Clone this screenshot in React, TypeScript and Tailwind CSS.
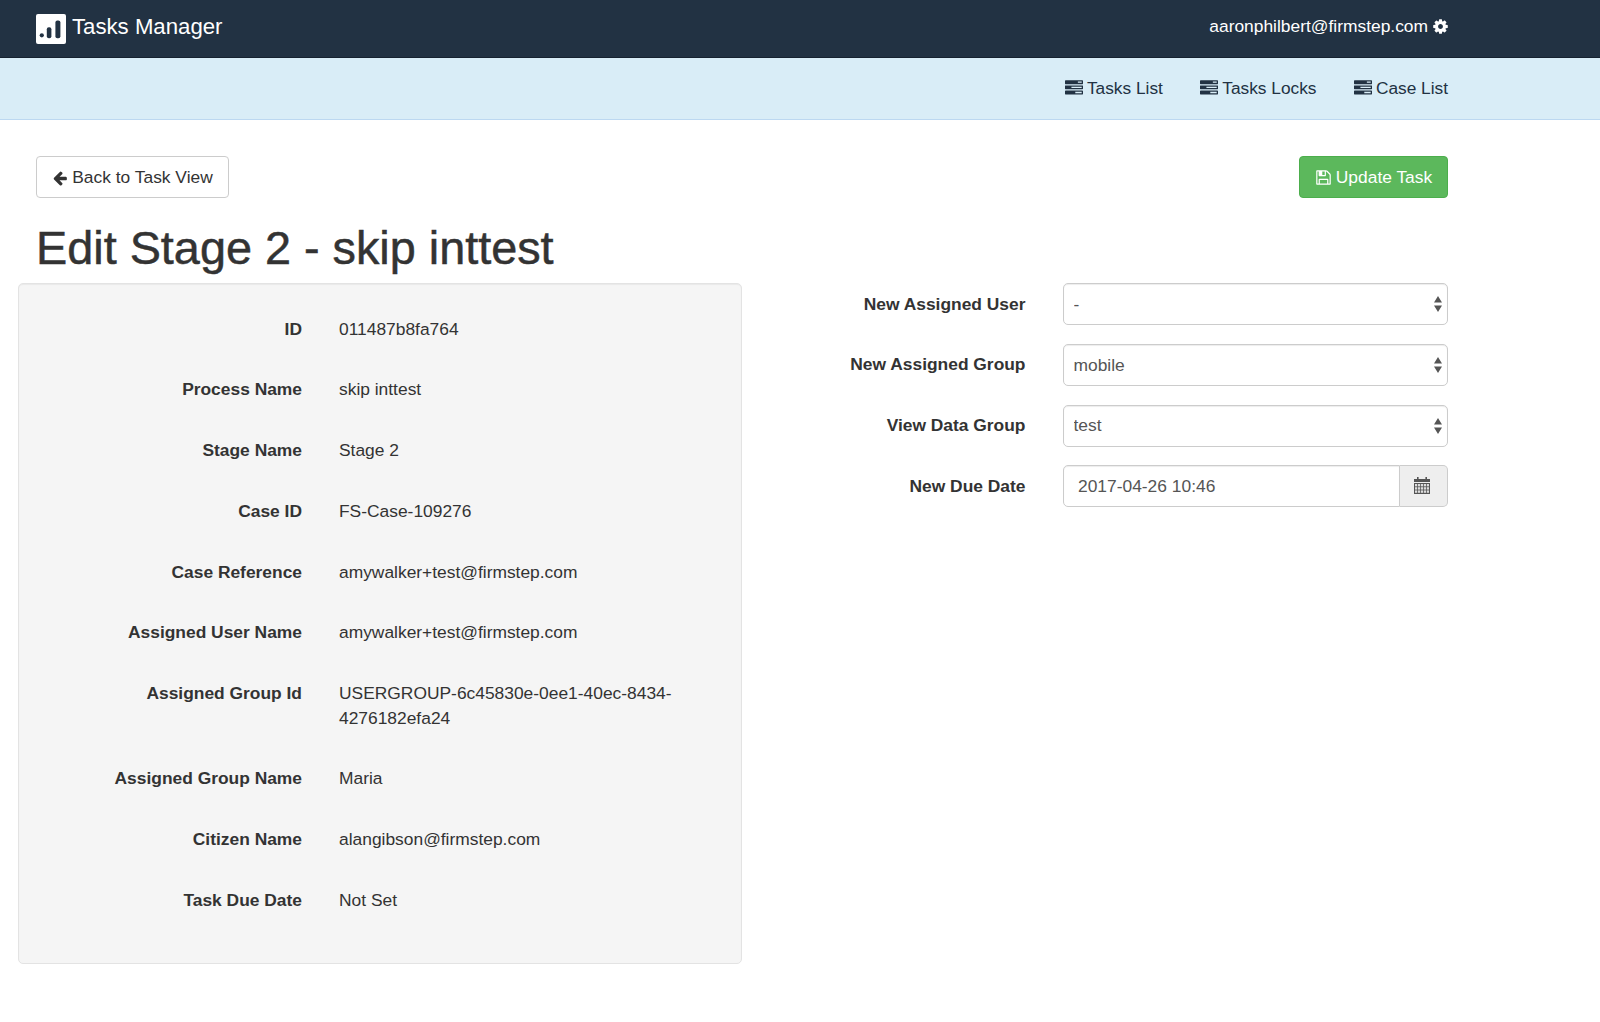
import React from "react";

const I = ({ d, className }: { d: string; className: string }) => (
  <svg viewBox="0 0 1792 1792" className={className} fill="currentColor" fillRule="evenodd">
    <path d={d} />
  </svg>
);

const tasks =
  "M1024 1408h640v-128h-640v128zm-384-512h1024v-128h-1024v128zm640-512h384v-128h-384v128zm512 832v256q0 26-19 45t-45 19h-1664q-26 0-45-19t-19-45v-256q0-26 19-45t45-19h1664q26 0 45 19t19 45zm0-512v256q0 26-19 45t-45 19h-1664q-26 0-45-19t-19-45v-256q0-26 19-45t45-19h1664q26 0 45 19t19 45zm0-512v256q0 26-19 45t-45 19h-1664q-26 0-45-19t-19-45v-256q0-26 19-45t45-19h1664q26 0 45 19t19 45z";
const cog =
  "M1152 896q0-106-75-181t-181-75-181 75-75 181 75 181 181 75 181-75 75-181zm512-109v222q0 12-8 23t-20 13l-185 28q-19 54-39 91 35 50 107 138 10 12 10 25t-9 23q-27 37-99 108t-94 71q-12 0-26-9l-138-108q-44 23-91 38-16 136-29 186-7 28-36 28h-222q-14 0-24.5-8.5t-11.5-21.5l-28-184q-49-16-90-37l-141 107q-10 9-25 9-14 0-25-11-126-114-165-168-7-10-7-23 0-12 8-23 15-21 51-66.5t54-70.5q-27-50-41-99l-183-27q-13-2-21-12.5t-8-23.5v-222q0-12 8-23t19-13l186-28q14-46 39-92-40-57-107-138-10-12-10-24 0-10 9-23 26-36 98.5-107.5t94.5-71.5q13 0 26 10l138 107q44-23 91-38 16-136 29-186 7-28 36-28h222q14 0 24.5 8.5t11.5 21.5l28 184q49 16 90 37l142-107q9-9 24-9 13 0 25 10 129 119 165 170 7 8 7 22 0 12-8 23-15 21-51 66.5t-54 70.5q26 50 41 98l183 28q13 2 21 12.5t8 23.5z";
const arrow =
  "M1664 896v128q0 53-32.5 90.5t-84.5 37.5h-704l293 294q38 36 38 90t-38 90l-75 76q-37 37-90 37-52 0-91-37l-651-652q-37-37-37-90 0-52 37-91l651-650q38-38 91-38 52 0 90 38l75 74q38 38 38 91t-38 91l-293 293h704q52 0 84.5 37.5t32.5 90.5z";
const floppy =
  "M512 1536h768v-384h-768v384zm896 0h128v-896q0-14-10-38.5t-20-34.5l-281-281q-10-10-34-20t-39-10v416q0 40-28 68t-68 28h-576q-40 0-68-28t-28-68v-416h-128v1280h128v-416q0-40 28-68t68-28h832q40 0 68 28t28 68v416zm-384-928v-320q0-13-9.5-22.5t-22.5-9.5h-192q-13 0-22.5 9.5t-9.5 22.5v320q0 13 9.5 22.5t22.5 9.5h192q13 0 22.5-9.5t9.5-22.5zm640 32v928q0 40-28 68t-68 28h-1344q-40 0-68-28t-28-68v-1344q0-40 28-68t68-28h928q40 0 88 20t76 48l280 280q28 28 48 76t20 88z";

const rows: [string, string][] = [
  ["ID", "011487b8fa764"],
  ["Process Name", "skip inttest"],
  ["Stage Name", "Stage 2"],
  ["Case ID", "FS-Case-109276"],
  ["Case Reference", "amywalker+test@firmstep.com"],
  ["Assigned User Name", "amywalker+test@firmstep.com"],
  ["Assigned Group Id", "USERGROUP-6c45830e-0ee1-40ec-8434-4276182efa24"],
  ["Assigned Group Name", "Maria"],
  ["Citizen Name", "alangibson@firmstep.com"],
  ["Task Due Date", "Not Set"],
];

const CalendarIcon = () => (
  <svg viewBox="0 0 16 17" className="w-[16px] h-[17px] -ml-[2px] -mt-[1px]">
    <rect x="3" y="0" width="1.6" height="3" fill="#555" />
    <rect x="11.4" y="0" width="1.6" height="3" fill="#555" />
    <rect x="0" y="2" width="16" height="3" fill="#555" />
    <rect x="0" y="6" width="16" height="11" fill="#555" />
    {[0, 1, 2].map((r) =>
      [0, 1, 2, 3, 4].map((c) => (
        <rect key={`${r}-${c}`} x={1 + c * 2.95} y={7 + r * 3.2} width="2.2" height="2.4" fill="#ddd" />
      )),
    )}
  </svg>
);

const Sel = ({ label, value }: { label: string; value: string }) => (
  <div className="flex items-start mb-[18.8px]">
    <label className="w-[283.5px] text-right font-bold text-[#333] pt-[8.5px] shrink-0">{label}</label>
    <div className="relative ml-[37px] w-[385px] h-[42px]">
      <select
        defaultValue={value}
        className="block w-full h-full appearance-none bg-white border border-[#ccc] rounded-[5px] pl-[10px] pr-6 text-[17.4px] text-[#555] shadow-[inset_0_1px_1px_rgba(0,0,0,0.075)] outline-none"
      >
        <option value={value}>{value}</option>
      </select>
      <svg viewBox="0 0 8 16" className="absolute right-[6px] top-[13px] w-[8px] h-[16px] text-[#555]" fill="currentColor">
        <path d="M4 0l4 6.5h-8zM4 16l-4-6.5h8z" />
      </svg>
    </div>
  </div>
);

export default function App() {
  return (
    <div className="min-h-[1022px] bg-white font-['Liberation_Sans',Arial,sans-serif] text-[17.4px] leading-[24.3px] text-[#333]">
      <header className="h-[58px] bg-[#223243] border-b border-[#162230] pl-[36px] pr-[152px] flex items-center justify-between text-white">
        <div className="flex items-center">
          <svg viewBox="0 0 30 30" className="w-[30px] h-[30px] mr-[6px]">
            <rect width="30" height="30" rx="2" fill="#fff" />
            <rect x="3.7" y="19.2" width="4.2" height="4.2" rx="2.1" fill="#223243" />
            <rect x="10.8" y="13.2" width="4.6" height="11" rx="2" fill="#223243" />
            <rect x="19.4" y="6.6" width="5" height="17.6" rx="2" fill="#223243" />
          </svg>
          <span className="text-[22.2px] leading-none -mt-[2px]">Tasks Manager</span>
        </div>
        <div className="flex items-center -mt-[4px] text-[17.4px]">
          <span>aaronphilbert@firmstep.com</span>
          <I d={cog} className="w-[17px] h-[17px] ml-[4px] -mr-[1px]" />
        </div>
      </header>
      <nav className="h-[62px] bg-[#d9edf7] border-b border-[#bcd8f1] pr-[152px] flex items-center justify-end gap-[37.5px] text-[#223243] text-[17.3px]">
        {["Tasks List", "Tasks Locks", "Case List"].map((t) => (
          <a key={t} className="flex items-center">
            <I d={tasks} className="w-[18px] h-[18px] mr-[4px]" />
            {t}
          </a>
        ))}
      </nav>
      <main className="pt-[36px] pl-[17.5px] pr-[152px]">
        <div className="flex items-center justify-between pl-[18.5px]">
          <button className="h-[42px] w-[193px] flex items-center justify-center bg-white border border-[#ccc] rounded-[4px] text-[#333] pt-[1px]">
            <I d={arrow} className="w-[16px] h-[16px] mr-[4px]" />
            Back to Task View
          </button>
          <button className="h-[42px] w-[149px] flex items-center justify-center bg-[#5cb85c] border border-[#4cae4c] rounded-[4px] text-white pt-[1px]">
            <I d={floppy} className="w-[17px] h-[17px] mr-[4px]" />
            Update Task
          </button>
        </div>
        <h1 className="pl-[18.5px] pt-[24px] h-[85px] text-[46.8px] leading-[52px] font-medium text-[#333] [-webkit-text-stroke:0.5px_#333]">Edit Stage 2 - skip inttest</h1>
        <div className="flex items-start">
          <section className="w-[724.5px] h-[681px] bg-[#f5f5f5] border border-[#e3e3e3] rounded-[5px] shadow-[inset_0_1px_1px_rgba(0,0,0,0.05)] pt-[24px] pl-[23.5px] shrink-0">
            {rows.map(([k, v]) => (
              <div key={k} className="flex items-start mb-[18.5px] pt-[8.5px] pb-[9.5px]">
                <div className="w-[260px] text-right font-bold shrink-0">{k}</div>
                <div className="ml-[37px] w-[360px]">{v}</div>
              </div>
            ))}
          </section>
          <form className="w-[0px] grow">
            <Sel label="New Assigned User" value="-" />
            <Sel label="New Assigned Group" value="mobile" />
            <Sel label="View Data Group" value="test" />
            <div className="flex items-start">
              <label className="w-[283.5px] text-right font-bold text-[#333] pt-[8.5px] shrink-0">New Due Date</label>
              <div className="ml-[37px] w-[385px] h-[42px] flex">
                <input
                  readOnly
                  value="2017-04-26 10:46"
                  className="w-[337px] h-full border border-[#ccc] rounded-l-[5px] px-[14.5px] text-[17.4px] text-[#555] bg-white shadow-[inset_0_1px_1px_rgba(0,0,0,0.075)] outline-none"
                />
                <span className="w-[48px] h-full flex items-center justify-center bg-[#eee] border border-l-0 border-[#ccc] rounded-r-[5px]">
                  <CalendarIcon />
                </span>
              </div>
            </div>
          </form>
        </div>
      </main>
    </div>
  );
}
